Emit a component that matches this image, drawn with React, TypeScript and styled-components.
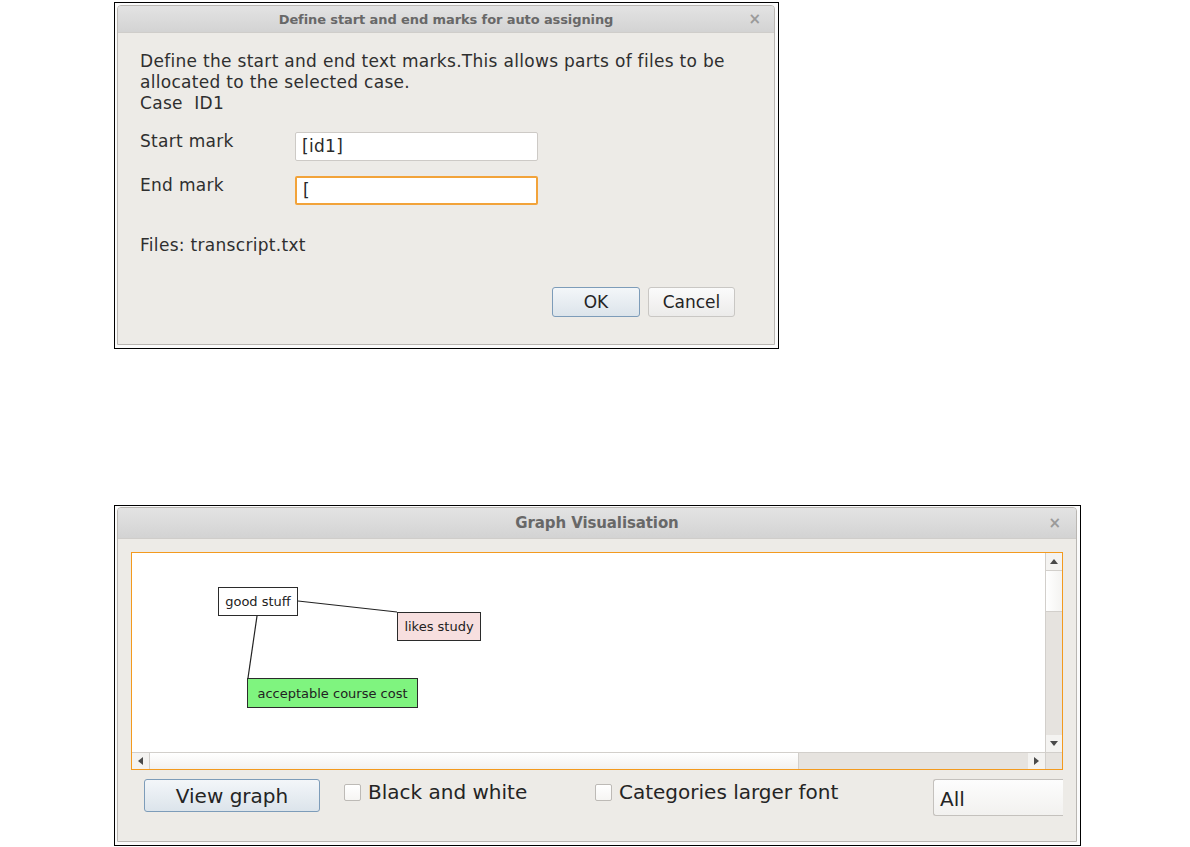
import { createGlobalStyle, styled } from "styled-components";

const GlobalStyle = createGlobalStyle`
  * {
    box-sizing: border-box;
  }
  body {
    margin: 0;
    background: #ffffff;
    font-family: "DejaVu Sans", "Liberation Sans", sans-serif;
  }
`;

const Page = styled.div`
  display: flex;
  flex-direction: column;
  padding: 2px 0 0 114px;
`;

const Figure = styled.div<{ $width: number; $height: number; $pad: string; $top?: number }>`
  display: flex;
  width: ${(p) => p.$width}px;
  height: ${(p) => p.$height}px;
  margin-top: ${(p) => p.$top ?? 0}px;
  padding: ${(p) => p.$pad};
  border: 1px solid #000;
  background: #fbfbfb;
`;

const Dialog = styled.div`
  flex: 1;
  display: flex;
  flex-direction: column;
  border: 1px solid #b9b6b2;
  border-radius: 4px 4px 0 0;
  background: #edebe7;
  overflow: hidden;
`;

const TitleBar = styled.div<{ $height: number; $size: number }>`
  position: relative;
  display: flex;
  align-items: center;
  justify-content: center;
  height: ${(p) => p.$height}px;
  flex-shrink: 0;
  background: linear-gradient(#e3e3e3, #d3d3d3);
  border-bottom: 1px solid #cfcdca;
  color: #686868;
  font-weight: bold;
  font-size: ${(p) => p.$size}px;
  letter-spacing: -0.1px;
`;

const Close = styled.span<{ $right: number }>`
  position: absolute;
  right: ${(p) => p.$right}px;
  top: 50%;
  transform: translateY(-50%);
  color: #9a9a9a;
  font-size: 15px;
  font-weight: bold;
`;

/* ---- first dialog ---- */

const MarksBody = styled.div`
  display: flex;
  flex-direction: column;
  padding: 18px 39px 0 22px;
  color: #2f2f2f;
  font-size: 17px;
  letter-spacing: 0.3px;
  line-height: 21px;
`;

const Line = styled.div``;

const FormRow = styled.div<{ $top: number }>`
  display: flex;
  align-items: flex-start;
  margin-top: ${(p) => p.$top}px;
`;

const Label = styled.div`
  width: 155px;
  flex-shrink: 0;
`;

const TextInput = styled.div<{ $focused?: boolean }>`
  width: 243px;
  height: 29px;
  margin-top: 1px;
  padding: 0 6px;
  display: flex;
  align-items: center;
  background: #fff;
  border: ${(p) => (p.$focused ? "2px solid #f2a33a" : "1px solid #cdcac6")};
  border-radius: 2px;
  color: #2a2a2a;
`;

const FilesLine = styled.div`
  margin-top: 30px;
`;

const ButtonRow = styled.div`
  display: flex;
  justify-content: flex-end;
  gap: 8px;
  margin-top: 31px;
`;

const PushButton = styled.div<{ $primary?: boolean; $w: number; $h: number; $size: number }>`
  width: ${(p) => p.$w}px;
  height: ${(p) => p.$h}px;
  display: flex;
  align-items: center;
  justify-content: center;
  border-radius: 3px;
  font-size: ${(p) => p.$size}px;
  color: #242424;
  letter-spacing: 0;
  border: 1px solid ${(p) => (p.$primary ? "#7d9cb9" : "#c9c7c4")};
  background: ${(p) =>
    p.$primary
      ? "linear-gradient(#f3f6f9, #dce4eb)"
      : "linear-gradient(#fbfbfb, #ecebea)"};
`;

/* ---- graph dialog ---- */

const GraphBody = styled.div`
  display: flex;
  flex-direction: column;
  padding: 13px 13px 0 13px;
`;

const CanvasFrame = styled.div`
  display: grid;
  grid-template-columns: 1fr 17px;
  grid-template-rows: 1fr 17px;
  width: 932px;
  height: 218px;
  border: 1px solid #f39a1e;
  background: #fff;
`;

const Canvas = styled.div`
  position: relative;
  overflow: hidden;
  background: #fff;
`;

const Node = styled.div<{ $bg: string }>`
  position: absolute;
  display: flex;
  align-items: center;
  justify-content: center;
  border: 1px solid #2b2b2b;
  background: ${(p) => p.$bg};
  color: #222;
  font-size: 13px;
  white-space: nowrap;
`;

const Edges = styled.svg`
  position: absolute;
  left: 0;
  top: 0;
  width: 100%;
  height: 100%;
`;

const VScroll = styled.div`
  display: flex;
  flex-direction: column;
  border-left: 1px solid #d2cfcb;
  background: #e6e3df;
`;

const HScroll = styled.div`
  display: flex;
  border-top: 1px solid #d2cfcb;
  background: #e6e3df;
`;

const ArrowButton = styled.div<{ $vertical?: boolean }>`
  display: flex;
  align-items: center;
  justify-content: center;
  flex-shrink: 0;
  width: ${(p) => (p.$vertical ? "100%" : "17px")};
  height: ${(p) => (p.$vertical ? "17px" : "100%")};
  background: #f4f3f1;
  color: #4a4a4a;
`;

const Thumb = styled.div<{ $vertical?: boolean; $size: number }>`
  flex-shrink: 0;
  ${(p) => (p.$vertical ? "height" : "width")}: ${(p) => p.$size}px;
  background: ${(p) =>
    p.$vertical ? "linear-gradient(90deg, #ffffff, #f4f3f1)" : "linear-gradient(#ffffff, #f2f1ef)"};
  border-${(p) => (p.$vertical ? "top" : "left")}: 1px solid #d2cfcb;
  border-${(p) => (p.$vertical ? "bottom" : "right")}: 1px solid #d2cfcb;
`;

const Track = styled.div`
  flex: 1;
`;

const Corner = styled.div`
  background: #e6e3df;
  border-left: 1px solid #d2cfcb;
  border-top: 1px solid #d2cfcb;
`;

const Controls = styled.div`
  display: flex;
  align-items: flex-start;
  margin-top: 9px;
  padding-left: 13px;
  font-size: 20px;
  color: #242424;
`;

const CheckGroup = styled.div<{ $w: number; $left?: number }>`
  display: flex;
  align-items: center;
  width: ${(p) => p.$w}px;
  margin-left: ${(p) => p.$left ?? 0}px;
  margin-top: 5px;
  line-height: 17px;
`;

const CheckBox = styled.div`
  width: 17px;
  height: 17px;
  margin-right: 7px;
  border: 1px solid #bdbab6;
  border-radius: 2px;
  background: linear-gradient(#ffffff, #f6f5f3);
`;

const Combo = styled.div`
  width: 130px;
  height: 37px;
  display: flex;
  align-items: center;
  padding: 2px 0 0 6px;
  border: 1px solid #c4c1bd;
  border-right: none;
  border-radius: 3px 0 0 3px;
  background: linear-gradient(#fdfdfd, #f2f1ef);
`;

const Tri = ({ dir }: { dir: "up" | "down" | "left" | "right" }) => {
  const pts = {
    up: "0,5 4,0 8,5",
    down: "0,0 8,0 4,5",
    left: "5,0 5,8 0,4",
    right: "0,0 0,8 5,4",
  }[dir];
  const vertical = dir === "up" || dir === "down";
  return (
    <svg width={vertical ? 8 : 5} height={vertical ? 5 : 8}>
      <polygon points={pts} fill="currentColor" />
    </svg>
  );
};

function MarksDialog() {
  return (
    <Figure $width={665} $height={347} $pad="2px 3px 3px 2px">
      <Dialog>
        <TitleBar $height={27} $size={13}>
          Define start and end marks for auto assigning
          <Close $right={13}>×</Close>
        </TitleBar>
        <MarksBody>
          <Line>Define the start and end text marks.This allows parts of files to be</Line>
          <Line>allocated to the selected case.</Line>
          <Line>Case&nbsp;&nbsp;ID1</Line>
          <FormRow $top={17}>
            <Label>Start mark</Label>
            <TextInput>[id1]</TextInput>
          </FormRow>
          <FormRow $top={14}>
            <Label>End mark</Label>
            <TextInput $focused>[</TextInput>
          </FormRow>
          <FilesLine>Files: transcript.txt</FilesLine>
          <ButtonRow>
            <PushButton $primary $w={88} $h={30} $size={17}>
              OK
            </PushButton>
            <PushButton $w={87} $h={30} $size={17}>
              Cancel
            </PushButton>
          </ButtonRow>
        </MarksBody>
      </Dialog>
    </Figure>
  );
}

const nodes = [
  { label: "good stuff", x: 86, y: 34, w: 80, h: 29, bg: "#ffffff" },
  { label: "likes study", x: 265, y: 59, w: 84, h: 29, bg: "#f7dfdf" },
  { label: "acceptable course cost", x: 115, y: 125, w: 171, h: 30, bg: "#7ff47f" },
];

function GraphDialog() {
  return (
    <Figure $width={967} $height={341} $pad="1px 3px 3px 2px" $top={156}>
      <Dialog>
        <TitleBar $height={31} $size={15}>
          Graph Visualisation
          <Close $right={15}>×</Close>
        </TitleBar>
        <GraphBody>
          <CanvasFrame>
            <Canvas>
              <Edges>
                <line x1={166} y1={48} x2={265} y2={59} stroke="#222" strokeWidth={1.2} />
                <line x1={125} y1={63} x2={116} y2={125} stroke="#222" strokeWidth={1.2} />
              </Edges>
              {nodes.map((n) => (
                <Node
                  key={n.label}
                  $bg={n.bg}
                  style={{ left: n.x, top: n.y, width: n.w, height: n.h }}
                >
                  {n.label}
                </Node>
              ))}
            </Canvas>
            <VScroll>
              <ArrowButton $vertical>
                <Tri dir="up" />
              </ArrowButton>
              <Thumb $vertical $size={42} />
              <Track />
              <ArrowButton $vertical>
                <Tri dir="down" />
              </ArrowButton>
            </VScroll>
            <HScroll>
              <ArrowButton>
                <Tri dir="left" />
              </ArrowButton>
              <Thumb $size={650} />
              <Track />
              <ArrowButton>
                <Tri dir="right" />
              </ArrowButton>
            </HScroll>
            <Corner />
          </CanvasFrame>
          <Controls>
            <PushButton $primary $w={176} $h={33} $size={20}>
              View graph
            </PushButton>
            <CheckGroup $w={251} $left={24}>
              <CheckBox />
              Black and white
            </CheckGroup>
            <CheckGroup $w={338}>
              <CheckBox />
              Categories larger font
            </CheckGroup>
            <Combo>All</Combo>
          </Controls>
        </GraphBody>
      </Dialog>
    </Figure>
  );
}

export default function App() {
  return (
    <>
      <GlobalStyle />
      <Page>
        <MarksDialog />
        <GraphDialog />
      </Page>
    </>
  );
}
